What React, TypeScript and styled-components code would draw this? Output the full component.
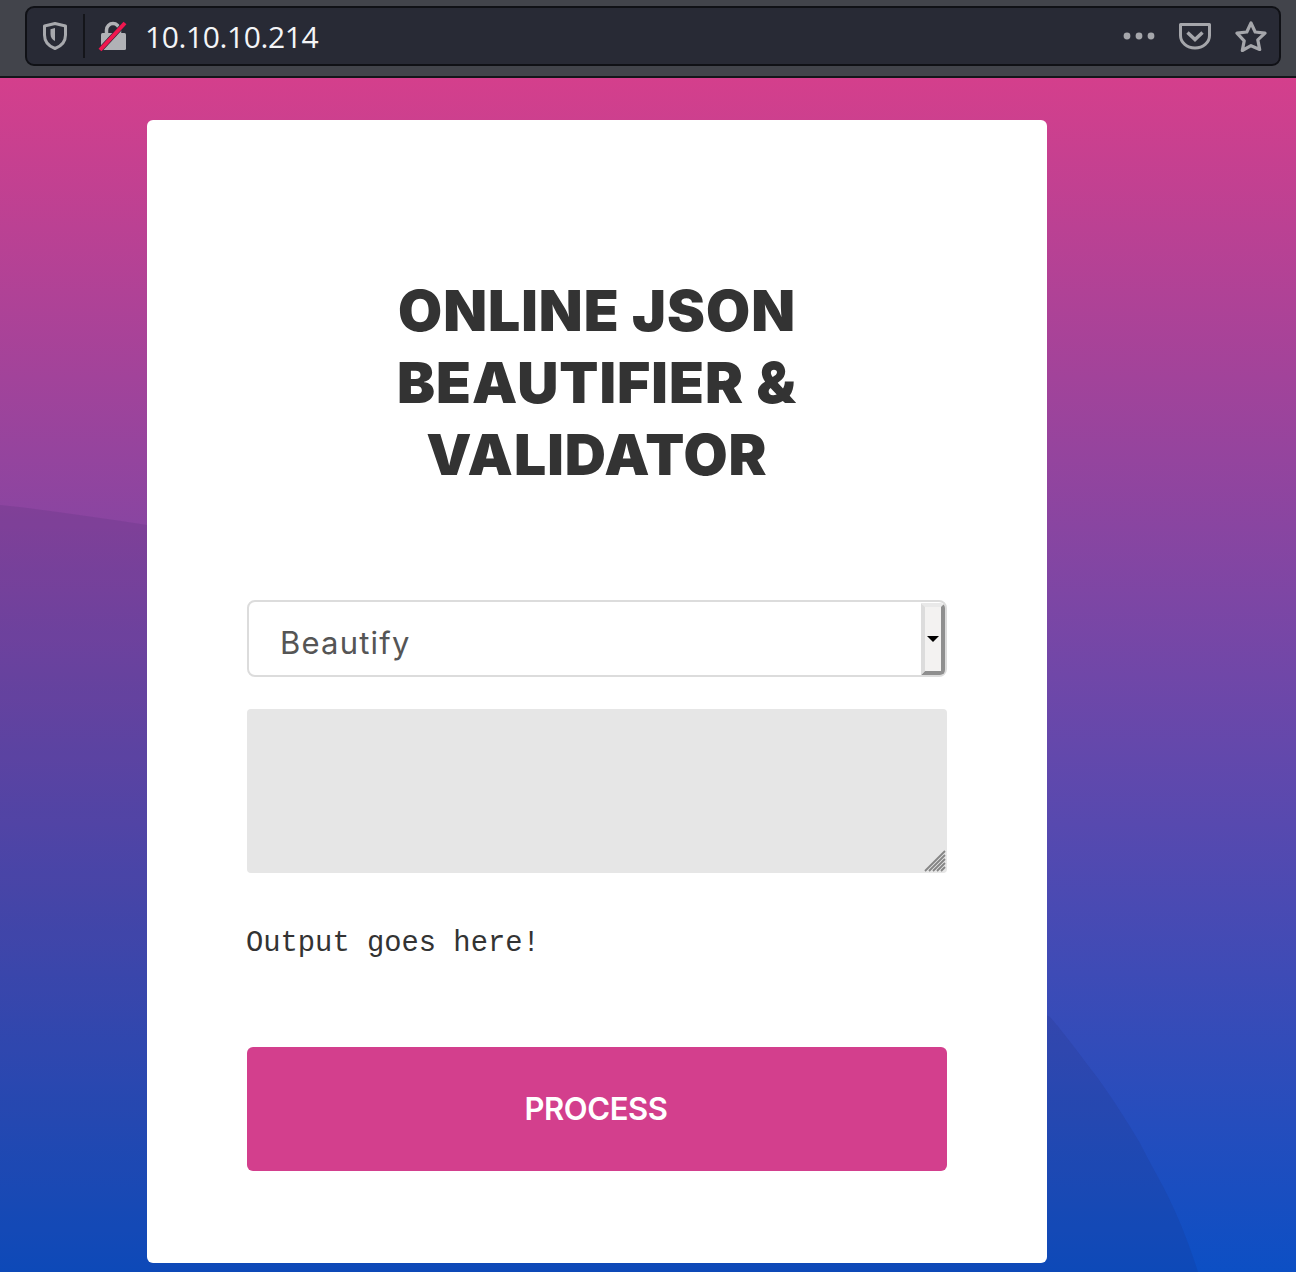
import React from 'react';
import styled, { createGlobalStyle } from 'styled-components';

const GlobalStyle = createGlobalStyle`
  html, body {
    margin: 0;
    padding: 0;
  }
  * {
    box-sizing: border-box;
  }
`;

const Page = styled.div`
  width: 1296px;
  height: 1272px;
  overflow: hidden;
  display: flex;
  flex-direction: column;
`;

const BrowserBar = styled.header`
  height: 78px;
  flex: none;
  background: #42444b;
  border-bottom: 2px solid #14151a;
  padding: 6px 15px 10px 25px;
`;

const UrlBar = styled.div`
  height: 60px;
  background: #282a35;
  border: 2px solid #101116;
  border-radius: 9px;
  display: flex;
  align-items: center;
  padding: 0 11px 0 15px;
`;

const Divider = styled.span`
  width: 2px;
  height: 44px;
  background: #14151a;
  margin: 0 13px 0 15px;
`;

const Address = styled.span`
  flex: 1;
  margin-left: 17px;
  font-family: 'Open Sans', sans-serif;
  font-size: 30px;
  letter-spacing: -0.4px;
  color: #f4f5f7;
`;

const BarIcon = styled.svg`
  display: block;
  flex: none;
`;

const IconGap = styled.span<{ $w: number }>`
  width: ${p => p.$w}px;
  flex: none;
`;

const Backdrop = styled.main`
  position: relative;
  flex: 1;
  display: flex;
  justify-content: center;
  align-items: flex-start;
  padding: 42px 102px 0 0;
  background: linear-gradient(180deg, #d43f8c 0%, #0c4fc4 100%);
`;

const Curve = styled.svg`
  position: absolute;
  left: 0;
  top: 0;
`;

const Card = styled.section`
  position: relative;
  width: 900px;
  height: 1143px;
  background: #fff;
  border-radius: 6px;
  padding: 155px 100px 0;
`;

const Title = styled.h1`
  margin: 0 0 109px;
  font-family: Inter, sans-serif;
  font-weight: 900;
  font-size: 57px;
  line-height: 72px;
  letter-spacing: 1px;
  text-align: center;
  color: #333;
`;

const SelectBox = styled.div`
  height: 77px;
  border: 2px solid #dcdcdc;
  border-radius: 8px;
  display: flex;
  align-items: center;
  justify-content: space-between;
  padding: 1px 0 1px 31px;
  font-family: Inter, sans-serif;
  font-size: 31px;
  letter-spacing: 1.2px;
  color: #555;
`;

const SelectLabel = styled.span`
  padding-top: 8px;
`;

const SelectSpin = styled.span`
  width: 24px;
  height: 72px;
  background: #f3f2f1;
  border-left: 4px solid #dcdcdc;
  border-right: 4px solid #8f8f8f;
  border-bottom: 4px solid #8f8f8f;
  border-top: 4px solid #e9e9e9;
  display: flex;
  align-items: center;
  justify-content: center;
  border-radius: 0 5px 5px 0;
  &::after {
    content: '';
    border-left: 6px solid transparent;
    border-right: 6px solid transparent;
    border-top: 6px solid #000;
  }
`;

const InputArea = styled.div`
  position: relative;
  height: 164px;
  margin-top: 32px;
  background: #e6e6e6;
  border-radius: 4px;
`;

const ResizeGrip = styled.svg`
  position: absolute;
  right: 1px;
  bottom: 1px;
`;

const Output = styled.p`
  margin: 54px 0 0 -1px;
  height: 34px;
  font-family: 'Liberation Mono', monospace;
  font-size: 28.8px;
  line-height: 34px;
  color: #333;
`;

const ProcessButton = styled.button`
  display: block;
  width: 100%;
  height: 124px;
  margin-top: 86px;
  padding: 0 2px 2px 0;
  border: 0;
  border-radius: 6px;
  background: #d33f8d;
  color: #fff;
  font-family: Inter, sans-serif;
  font-weight: 600;
  font-size: 31px;
  letter-spacing: -0.4px;
`;

const ShieldIcon = () => (
  <BarIcon width="26" height="30" viewBox="0 0 26 30" fill="none">
    <path d="M2.5 5 13 2.5 23.5 5v9c0 7-5 11.5-10.500 13.500C7.500 25.500 2.500 21 2.500 14z" stroke="#a8a9ad" strokeWidth="3" strokeLinejoin="round" />
    <path d="M13 7v13c-2.500-1-4.500-3.500-4.500-7V8.200z" fill="#a8a9ad" />
  </BarIcon>
);

const LockIcon = () => (
  <BarIcon width="30" height="32" viewBox="0 0 30 32" fill="none">
    <path d="M8.500 14V10a6.500 6.500 0 0 1 13 0v4" stroke="#b1b2b6" strokeWidth="3.500" />
    <rect x="3" y="13" width="25" height="17" rx="1.500" fill="#b1b2b6" />
    <path d="M27 3 2 30" stroke="#282a35" strokeWidth="5" />
    <path d="M27 3 2 30" stroke="#f0174f" strokeWidth="4" />
  </BarIcon>
);

const PocketIcon = () => (
  <BarIcon width="34" height="30" viewBox="0 0 34 30" fill="none">
    <path d="M2.500 3.500h29v11c0 7-6.500 12.500-14.500 12.500S2.500 21.500 2.500 14.500z" stroke="#a5a6ab" strokeWidth="3" strokeLinejoin="round" />
    <path d="m9.500 11.500 7.500 7 7.500-7" stroke="#a5a6ab" strokeWidth="3.500" />
  </BarIcon>
);

const StarIcon = () => (
  <BarIcon width="34" height="32" viewBox="0 0 34 32" fill="none">
    <path d="m17 3 4.200 9 9.800 1.200-7.200 6.700 1.900 9.600L17 25.700 8.300 30.500l1.900-9.600L3 13.200 12.800 12z" stroke="#a5a6ab" strokeWidth="3.200" strokeLinejoin="round" />
  </BarIcon>
);

const MoreIcon = () => (
  <BarIcon width="34" height="8" viewBox="0 0 34 8" fill="#a5a6ab">
    <circle cx="4" cy="4" r="3.400" />
    <circle cx="16" cy="4" r="3.400" />
    <circle cx="28" cy="4" r="3.400" />
  </BarIcon>
);

const App: React.FC = () => (
  <Page>
    <GlobalStyle />
    <BrowserBar>
      <UrlBar>
        <ShieldIcon />
        <Divider />
        <LockIcon />
        <Address>10.10.10.214</Address>
        <MoreIcon />
        <IconGap $w={21} />
        <PocketIcon />
        <IconGap $w={22} />
        <StarIcon />
      </UrlBar>
    </BrowserBar>
    <Backdrop>
      <Curve width="1296" height="1194" viewBox="0 0 1296 1194">
        <path d="M0 427C50 432 100 440 147 447L1050 939C1070 962 1085 984 1097 999 1115 1024 1128 1045 1140 1065 1155 1095 1165 1110 1173 1129 1183 1150 1192 1175 1198 1194H0z" fill="#1a1a4a" fillOpacity="0.1" />
      </Curve>
      <Card>
        <Title>
          ONLINE JSON
          <br />
          BEAUTIFIER &amp;
          <br />
          VALIDATOR
        </Title>
        <SelectBox>
          <SelectLabel>Beautify</SelectLabel>
          <SelectSpin />
        </SelectBox>
        <InputArea>
          <ResizeGrip width="22" height="22" viewBox="0 0 22 22" stroke="#858585" strokeWidth="1.800">
            <path d="M21 1 1 21M21 5 5 21M21 9 9 21M21 13 13 21M21 17 17 21" />
          </ResizeGrip>
        </InputArea>
        <Output>Output goes here!</Output>
        <ProcessButton>PROCESS</ProcessButton>
      </Card>
    </Backdrop>
  </Page>
);

export default App;
